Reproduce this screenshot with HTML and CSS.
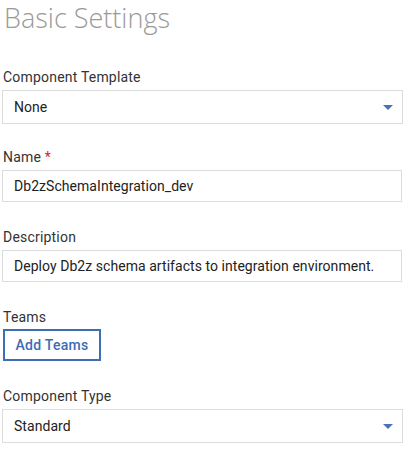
FILE: index.html
```html
<!DOCTYPE html>
<html>
<head>
<meta charset="utf-8">
<link rel="stylesheet" href="styles.css">
</head>
<body>
<div class="page">
  <h1 class="title">Basic Settings</h1>

  <div class="field">
    <div class="label">Component Template</div>
    <div class="box select"><span>None</span><span class="caret"></span></div>
  </div>

  <div class="field">
    <div class="label">Name <span class="req">*</span></div>
    <div class="box input"><span>Db2zSchemaIntegration_dev</span></div>
  </div>

  <div class="field">
    <div class="label">Description</div>
    <div class="box input"><span>Deploy Db2z schema artifacts to integration environment.</span></div>
  </div>

  <div class="field">
    <div class="label">Teams</div>
    <button class="btn">Add Teams</button>
  </div>

  <div class="field">
    <div class="label">Component Type</div>
    <div class="box select"><span>Standard</span><span class="caret"></span></div>
  </div>
</div>
</body>
</html>
```

FILE: styles.css
```css
html, body {
  margin: 0;
  padding: 0;
  background: #ffffff;
}

body {
  font-family: Roboto, "Liberation Sans", sans-serif;
  font-size: 14px;
  color: #333333;
}

.page {
  width: 401px;
  padding: 0 0 0 2px;
}

.title {
  margin: 0 0 0 2px;
  font-family: "Open Sans", sans-serif;
  font-weight: 300;
  font-size: 27px;
  line-height: 36px;
  color: #9a9a9a;
  height: 68px;
  white-space: nowrap;
}

.field {
  display: flex;
  flex-direction: column;
  align-items: flex-start;
  margin-bottom: 24px;
}

.label {
  line-height: 18px;
  margin: 0 0 4px 1px;
  color: #333333;
  letter-spacing: 0.2px;
}

.req {
  color: #e0182d;
}

.box {
  box-sizing: border-box;
  width: 401px;
  height: 34px;
  border: 1px solid #dcdcdc;
  background: #fff;
  display: flex;
  align-items: center;
  justify-content: space-between;
  padding: 0 9px 0 11px;
  color: #222222;
  letter-spacing: 0.05px;
  white-space: nowrap;
}

.box.input {
  height: 32px;
  width: 400px;
  margin-bottom: 2px;
}

.caret {
  width: 0;
  height: 0;
  border-left: 5px solid transparent;
  border-right: 5px solid transparent;
  border-top: 5px solid #4a72b6;
}

.btn {
  display: block;
  box-sizing: border-box;
  margin: -1px 0 2px 1px;
  width: 98px;
  height: 32px;
  border: 2px solid #3d6db3;
  background: #fff;
  color: #3d6db3;
  font-family: Roboto, "Liberation Sans", sans-serif;
  font-weight: 500;
  font-size: 14px;
  letter-spacing: 0.3px;
  padding: 0;
}
```
